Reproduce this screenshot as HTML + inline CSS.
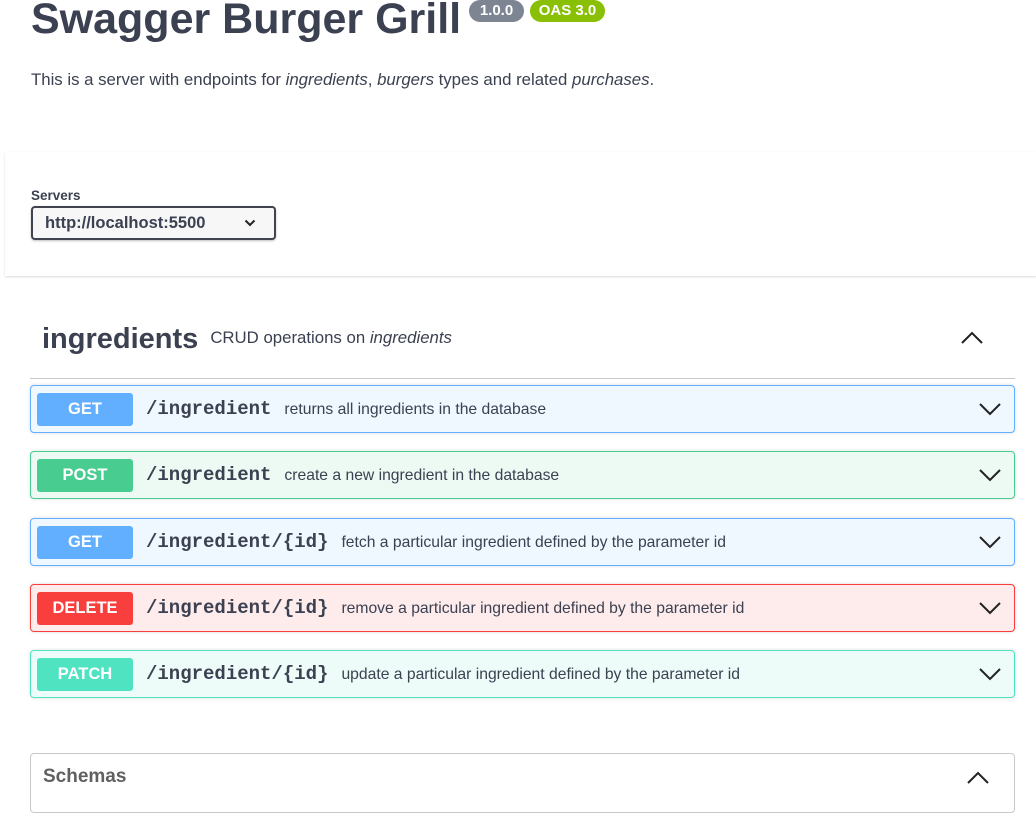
<!DOCTYPE html>
<html><head><meta charset="utf-8"><style>
*{box-sizing:border-box;margin:0;padding:0}
body{width:1036px;height:797px;overflow:hidden;background:#fff;font-family:"Liberation Sans",sans-serif;color:#3b4151;position:relative}
.abs{position:absolute}
h1{position:absolute;left:31px;top:-5px;font-size:43px;font-weight:bold;color:#3b4151;white-space:nowrap}
.badge{position:absolute;top:0;height:22px;border-radius:11px;color:#fff;font-weight:bold;font-size:15px;line-height:22px;text-align:center}
.desc{left:31px;top:70px;font-size:16.8px;white-space:nowrap}
.servers{left:5px;top:152px;width:1031px;height:124px;background:#fff;box-shadow:0 1px 2px rgba(0,0,0,.15)}
.sel{left:31px;top:206px;width:245px;height:34px;border:2px solid #41444e;border-radius:4px;background:#f7f7f7;box-shadow:0 1px 2px rgba(0,0,0,.25);font-weight:bold;font-size:16.5px;line-height:30px;padding-left:12px}
.op{position:absolute;left:30px;width:985px;height:48px;border:1px solid;border-radius:4px;box-shadow:0 0 3px rgba(0,0,0,.15)}
.m{position:absolute;left:6px;top:7px;width:96px;height:33px;border-radius:3px;color:#fff;font-weight:bold;font-size:16.5px;line-height:33px;text-align:center}
.p{position:absolute;left:115px;top:0;line-height:46px;font-family:"Liberation Mono",monospace;font-weight:bold;font-size:19px;color:#3b4151;white-space:nowrap}
.p span{font-family:"Liberation Sans",sans-serif;font-weight:normal;font-size:15.7px;margin-left:13px}
.chev{position:absolute;left:947px;top:15px}
</style></head><body>
<h1>Swagger Burger Grill</h1>
<div class="badge" style="left:469px;width:55px;background:#7d8492">1.0.0</div>
<div class="badge" style="left:530px;width:75px;background:#89bf04">OAS 3.0</div>
<div class="abs desc">This is a server with endpoints for <i>ingredients</i>, <i>burgers</i> types and related <i>purchases</i>.</div>
<div class="abs servers"></div>
<div class="abs" style="left:31px;top:188px;font-size:13.5px;font-weight:bold">Servers</div>
<div class="abs sel">http://localhost:5500
<svg class="abs" style="left:211px;top:10px" width="12" height="10" viewBox="0 0 12 10"><path d="M1.5 2.5L6 7l4.5-4.5" stroke="#222" stroke-width="2" fill="none"/></svg></div>
<div class="abs" style="left:42px;top:323px;font-size:29px;font-weight:bold;white-space:nowrap">ingredients<span style="font-size:16.8px;font-weight:normal;vertical-align:5px;margin-left:12px">CRUD operations on <i>ingredients</i></span></div>
<svg class="abs" style="left:960px;top:330px" width="24" height="16" viewBox="0 0 24 16"><path d="M2 13L12 3l10 10" stroke="#222" stroke-width="2" fill="none"/></svg>
<div class="abs" style="left:30px;top:378px;width:985px;height:1px;background:#c8c8cc"></div>

<div class="op" style="top:385px;border-color:#61affe;background:#eff7ff"><div class="m" style="background:#61affe">GET</div><div class="p">/ingredient<span>returns all ingredients in the database</span></div><svg class="chev" width="24" height="16" viewBox="0 0 24 16"><path d="M2 3l10 10L22 3" stroke="#222" stroke-width="2" fill="none"/></svg></div>
<div class="op" style="top:451px;border-color:#49cc90;background:#edfaf4"><div class="m" style="background:#49cc90">POST</div><div class="p">/ingredient<span>create a new ingredient in the database</span></div><svg class="chev" width="24" height="16" viewBox="0 0 24 16"><path d="M2 3l10 10L22 3" stroke="#222" stroke-width="2" fill="none"/></svg></div>
<div class="op" style="top:518px;border-color:#61affe;background:#eff7ff"><div class="m" style="background:#61affe">GET</div><div class="p">/ingredient/{id}<span>fetch a particular ingredient defined by the parameter id</span></div><svg class="chev" width="24" height="16" viewBox="0 0 24 16"><path d="M2 3l10 10L22 3" stroke="#222" stroke-width="2" fill="none"/></svg></div>
<div class="op" style="top:584px;border-color:#f93e3e;background:#feebeb"><div class="m" style="background:#f93e3e">DELETE</div><div class="p">/ingredient/{id}<span>remove a particular ingredient defined by the parameter id</span></div><svg class="chev" width="24" height="16" viewBox="0 0 24 16"><path d="M2 3l10 10L22 3" stroke="#222" stroke-width="2" fill="none"/></svg></div>
<div class="op" style="top:650px;border-color:#50e3c2;background:#edfcf9"><div class="m" style="background:#50e3c2">PATCH</div><div class="p">/ingredient/{id}<span>update a particular ingredient defined by the parameter id</span></div><svg class="chev" width="24" height="16" viewBox="0 0 24 16"><path d="M2 3l10 10L22 3" stroke="#222" stroke-width="2" fill="none"/></svg></div>

<div class="abs" style="left:30px;top:753px;width:985px;height:60px;border:1px solid #c8c8cc;border-radius:4px"></div>
<div class="abs" style="left:43px;top:766px;font-size:19px;font-weight:bold;color:#606060">Schemas</div>
<svg class="abs" style="left:966px;top:770px" width="24" height="16" viewBox="0 0 24 16"><path d="M2 13L12 3l10 10" stroke="#222" stroke-width="2" fill="none"/></svg>
</body></html>
